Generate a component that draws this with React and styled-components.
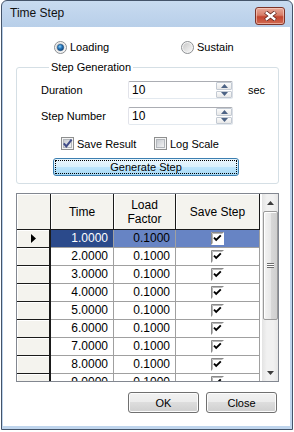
import React from "react";
import styled, { createGlobalStyle } from "styled-components";

const GlobalStyle = createGlobalStyle`
  html, body { margin: 0; padding: 0; background: #fff; }
  body { font-family: "Liberation Sans", Arial, sans-serif; color: #000; }
  * { box-sizing: border-box; }
`;

const steps = [1, 2, 3, 4, 5, 6, 7, 8, 9];

function RadioIcon({ checked }) {
  return (
    <svg width="13" height="13" viewBox="0 0 13 13">
      <defs>
        <linearGradient id={checked ? "rgOn" : "rgOff"} x1="0" y1="0" x2="1" y2="1">
          <stop offset="0" stopColor="#c9c9c9" />
          <stop offset="1" stopColor="#f7f7f7" />
        </linearGradient>
        <radialGradient id="dotBlue" cx="0.4" cy="0.35" r="0.7">
          <stop offset="0" stopColor="#8fd2f7" />
          <stop offset="0.45" stopColor="#2a7bc0" />
          <stop offset="1" stopColor="#0d3b6e" />
        </radialGradient>
      </defs>
      <circle cx="6.5" cy="6.5" r="6" fill="#f4f4f4" stroke="#8c8f92" />
      <circle cx="6.5" cy="6.5" r="4.5" fill={`url(#${checked ? "rgOn" : "rgOff"})`} />
      {checked && <circle cx="6.5" cy="6.5" r="3.2" fill="url(#dotBlue)" stroke="#1d4f80" strokeWidth="0.6" />}
    </svg>
  );
}

function CheckIcon({ checked }) {
  return (
    <svg width="13" height="13" viewBox="0 0 13 13">
      <defs>
        <linearGradient id="cbIn" x1="0" y1="0" x2="1" y2="1">
          <stop offset="0" stopColor="#c4c8ce" />
          <stop offset="1" stopColor="#f6f6f6" />
        </linearGradient>
      </defs>
      <rect x="0.5" y="0.5" width="12" height="12" fill="#f4f4f4" stroke="#8e8f8f" />
      <rect x="2.5" y="2.5" width="8" height="8" fill="url(#cbIn)" stroke="#b3b7bc" />
      {checked && (
        <path d="M2.8 6.4 L5.3 9.4 L10.6 2.6" fill="none" stroke="#404c88" strokeWidth="2" />
      )}
    </svg>
  );
}

function GridCheck() {
  return (
    <svg width="13" height="13" viewBox="0 0 13 13">
      <rect x="0" y="0" width="13" height="13" fill="#fff" />
      <path d="M0.5 12.5 V0.5 H12.5" fill="none" stroke="#8a8a8a" />
      <path d="M1.5 11.5 V1.5 H11.5" fill="none" stroke="#b8b8b8" />
      <path d="M3 5.6 L5.2 7.9 L9.8 3.3" fill="none" stroke="#000" strokeWidth="1.9" />
    </svg>
  );
}

function Tri({ up, color = "#4d6385", w = 7, h = 4 }) {
  return (
    <svg width={w} height={h} viewBox={`0 0 ${w} ${h}`}>
      <polygon points={up ? `0,${h} ${w / 2},0 ${w},${h}` : `0,0 ${w},0 ${w / 2},${h}`} fill={color} />
    </svg>
  );
}

function RowArrow() {
  return (
    <svg width="5" height="9" viewBox="0 0 5 9">
      <polygon points="0,0 5,4.5 0,9" fill="#000" />
    </svg>
  );
}

function CloseX() {
  return (
    <svg width="13" height="10" viewBox="0 0 13 10">
      <path d="M1.5 1 L11.5 9 M11.5 1 L1.5 9" stroke="#5a2018" strokeWidth="4" />
      <path d="M1.8 1.3 L11.2 8.7 M11.2 1.3 L1.8 8.7" stroke="#fff" strokeWidth="2.4" />
    </svg>
  );
}

function SpinBox({ value }) {
  return (
    <Spin>
      <SpinValue>{value}</SpinValue>
      <SpinButtons>
        <SpinBtn><Tri up w={7} h={4} /></SpinBtn>
        <SpinBtn><Tri w={7} h={4} /></SpinBtn>
      </SpinButtons>
    </Spin>
  );
}

export default function App() {
  return (
    <>
      <GlobalStyle />
      <Window>
        <TitleBar>
          <Title>Time Step</Title>
          <CloseButton><CloseX /></CloseButton>
        </TitleBar>
        <Client>
          <RadioRow>
            <Option><RadioIcon checked /> Loading</Option>
            <Option><RadioIcon /> Sustain</Option>
          </RadioRow>

          <Group>
            <Legend>Step Generation</Legend>
            <FieldRow>
              <span>Duration</span>
              <SpinBox value="10" />
              <Unit>sec</Unit>
            </FieldRow>
            <FieldRow $gap>
              <span>Step Number</span>
              <SpinBox value="10" />
            </FieldRow>
            <CheckRow>
              <Option><CheckIcon checked />Save Result</Option>
              <Option><CheckIcon />Log Scale</Option>
            </CheckRow>
            <GenerateButton><FocusRect>Generate Step</FocusRect></GenerateButton>
          </Group>

          <GridBox>
            <Table>
              <HeadCell />
              <HeadCell>Time</HeadCell>
              <HeadCell>Load<br />Factor</HeadCell>
              <HeadCell>Save Step</HeadCell>
              {steps.map((n) => {
                const sel = n === 1;
                return (
                  <React.Fragment key={n}>
                    <RowHead>{sel && <RowArrow />}</RowHead>
                    <NumCell $sel={sel && "dark"}>{n.toFixed(4)}</NumCell>
                    <NumCell $sel={sel && "light"}>0.1000</NumCell>
                    <CheckCell $sel={sel}><GridCheck /></CheckCell>
                  </React.Fragment>
                );
              })}
            </Table>
            <ScrollBar>
              <ScrollArrow><Tri up color="#3c3c3c" w={7} h={4} /></ScrollArrow>
              <Thumb><Grip /></Thumb>
              <Track />
              <ScrollArrow><Tri color="#3c3c3c" w={7} h={4} /></ScrollArrow>
            </ScrollBar>
          </GridBox>

          <Footer>
            <DialogButton>OK</DialogButton>
            <DialogButton>Close</DialogButton>
          </Footer>
        </Client>
      </Window>
    </>
  );
}

const Window = styled.div`
  width: 292px;
  height: 430px;
  margin-left: 1px;
  border: 1px solid #44546a;
  border-radius: 6px 6px 0 0;
  background: linear-gradient(#c8dbf0, #b8cfe9 26px, #bfd5ed);
  padding: 0 2px 3px 1px;
  display: flex;
  flex-direction: column;
`;

const TitleBar = styled.div`
  height: 26px;
  display: flex;
  align-items: center;
  justify-content: space-between;
  padding: 0 5px 2px 7px;
`;

const Title = styled.div`
  font-size: 12px;
  color: #111;
`;

const CloseButton = styled.div`
  width: 30px;
  height: 18px;
  margin-top: 6px;
  border: 1px solid #7c3328;
  border-radius: 3px;
  background: linear-gradient(#e8a999, #d77d68 45%, #c3452f 55%, #d06a52);
  box-shadow: inset 0 0 0 1px rgba(255, 220, 210, 0.55);
  display: flex;
  align-items: center;
  justify-content: center;
`;

const Client = styled.div`
  flex: 1;
  background: #fff;
  padding: 11px 11px 0 13px;
  font-size: 11px;
`;

const RadioRow = styled.div`
  display: grid;
  grid-template-columns: 127px auto;
  padding-left: 38px;
  height: 18px;
  align-items: center;
`;

const Option = styled.label`
  display: flex;
  align-items: center;
  gap: 3px;
  font-size: 11px;
  svg { flex: none; }
`;

const Group = styled.fieldset`
  margin: 4px 0 0;
  padding: 7px 0 7px 24px;
  border: 1px solid #d5dfe5;
  border-radius: 3px;
  min-width: 0;
`;

const Legend = styled.legend`
  margin-left: 8px;
  padding: 0 2px;
  font-size: 11px;
  line-height: 14px;
`;

const FieldRow = styled.div`
  display: grid;
  grid-template-columns: 87px 105px auto;
  align-items: center;
  height: 18px;
  margin-top: ${({ $gap }) => ($gap ? "8px" : "0")};
`;

const Unit = styled.span`
  margin-left: 15px;
`;

const Spin = styled.div`
  height: 18px;
  display: flex;
  border: 1px solid;
  border-color: #abadb3 #dbdfe6 #e3e9ef #e2e3ea;
  border-radius: 2px;
  background: #fff;
`;

const SpinValue = styled.div`
  flex: 1;
  padding-left: 3px;
  font-size: 12px;
  line-height: 16px;
`;

const SpinButtons = styled.div`
  width: 16px;
  display: flex;
  flex-direction: column;
  gap: 1px;
`;

const SpinBtn = styled.div`
  flex: 1;
  border: 1px solid #c3cad3;
  border-radius: 1px;
  background: linear-gradient(#fbfbfb, #e8e8e8);
  display: flex;
  align-items: center;
  justify-content: center;
`;

const CheckRow = styled.div`
  display: grid;
  grid-template-columns: 93px auto;
  padding-left: 20px;
  margin-top: 12px;
  height: 13px;
  align-items: center;
`;

const GenerateButton = styled.div`
  margin: 8px 0 0 12px;
  width: 186px;
  height: 18px;
  border: 1px solid #3c7fb1;
  border-radius: 3px;
  background: linear-gradient(#eaf6fd, #d9f0fc 50%, #bee6fd 50%, #a7d9f5);
  padding: 1px;
`;

const FocusRect = styled.div`
  height: 100%;
  border: 1px dotted #000;
  display: flex;
  align-items: center;
  justify-content: center;
  font-size: 11px;
`;

const GridBox = styled.div`
  margin-top: 9px;
  height: 189px;
  border: 1px solid #828790;
  display: flex;
  background: #fff;
  font-size: 12px;
`;

const Table = styled.div`
  flex: 1;
  overflow: hidden;
  display: grid;
  grid-template-columns: 34px 63px 62px 84px;
  grid-template-rows: 36px;
  grid-auto-rows: 18px;
  align-content: start;
  justify-content: start;
`;

const HeadCell = styled.div`
  background: #f4f3ee;
  border-right: 1px solid #1a1a1a;
  border-bottom: 1px solid #1a1a1a;
  box-shadow: inset 1px 1px 0 #fff;
  display: flex;
  align-items: center;
  justify-content: center;
  text-align: center;
  line-height: 14px;
  color: #000;
`;

const RowHead = styled.div`
  background: #f4f3ee;
  border-right: 2px solid #1a1a1a;
  border-bottom: 1px solid #1a1a1a;
  box-shadow: inset 1px 1px 0 #fff;
  display: flex;
  align-items: center;
  justify-content: center;
  padding-left: 1px;
`;

const cellBg = { dark: "#2b4a8b", light: "#6784c4" };

const NumCell = styled.div`
  border-right: 1px solid #a0a0a0;
  border-bottom: 1px solid #a0a0a0;
  background: ${({ $sel }) => ($sel ? cellBg[$sel] : "#fff")};
  color: ${({ $sel }) => ($sel === "dark" ? "#fff" : "#000")};
  text-align: right;
  padding-right: 5px;
  line-height: 17px;
`;

const CheckCell = styled.div`
  border-right: 1px solid #a0a0a0;
  border-bottom: 1px solid #a0a0a0;
  background: ${({ $sel }) => ($sel ? cellBg.light : "#fff")};
  display: flex;
  align-items: center;
  justify-content: center;
  padding-right: 1px;
`;

const ScrollBar = styled.div`
  width: 16px;
  display: flex;
  flex-direction: column;
  background: linear-gradient(90deg, #e3e3e3, #f1f1f1 30%, #f1f1f1 70%, #e6e6e6);
`;

const ScrollArrow = styled.div`
  height: 17px;
  display: flex;
  align-items: center;
  justify-content: center;
`;

const Thumb = styled.div`
  height: 109px;
  margin: 0 0 0 1px;
  width: 15px;
  border: 1px solid #9a9a9a;
  border-radius: 2px;
  background: linear-gradient(90deg, #f4f4f4, #e8e8e8 50%, #d9d9d9 50%, #cfcfcf);
  box-shadow: inset 1px 1px 0 #fff;
  display: flex;
  align-items: center;
  justify-content: center;
`;

const Grip = styled.div`
  width: 7px;
  height: 5px;
  border-top: 1px solid #6c6c6c;
  border-bottom: 1px solid #6c6c6c;
  background: linear-gradient(#fff 0 1px, #6c6c6c 1px 2px, #fff 2px 3px);
`;

const Track = styled.div`
  flex: 1;
`;

const Footer = styled.div`
  margin-top: 10px;
  display: flex;
  justify-content: flex-end;
  gap: 7px;
  padding-right: 2px;
`;

const DialogButton = styled.div`
  width: 71px;
  height: 21px;
  border: 1px solid #707070;
  border-radius: 3px;
  background: linear-gradient(#f2f2f2, #ebebeb 50%, #dddddd 50%, #cfcfcf);
  box-shadow: inset 0 0 0 1px #fcfcfc;
  display: flex;
  align-items: center;
  justify-content: center;
  font-size: 11px;
`;
